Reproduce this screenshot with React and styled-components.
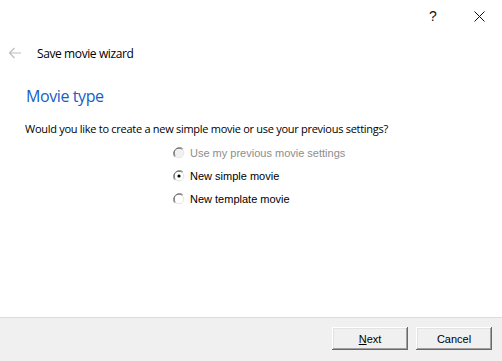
import React, { useState } from "react";
import styled, { createGlobalStyle } from "styled-components";

const Global = createGlobalStyle`
  html, body { margin: 0; padding: 0; background: #fff; }
  body { font-family: "Open Sans", "Noto Sans", sans-serif; }
  * { box-sizing: border-box; }
`;

const Window = styled.div`
  width: 502px;
  height: 361px;
  display: flex;
  flex-direction: column;
  background: #fff;
  overflow: hidden;
`;

const TitleBar = styled.div`
  height: 32px;
  flex-shrink: 0;
  display: flex;
  justify-content: flex-end;
  align-items: center;
`;

const CaptionButton = styled.div`
  width: 46px;
  height: 32px;
  display: flex;
  align-items: center;
  justify-content: center;
  font-family: "Liberation Sans", sans-serif;
  font-size: 14px;
  color: #111;
`;

const Header = styled.div`
  display: flex;
  align-items: center;
  height: 42px;
  flex-shrink: 0;
  padding-left: 8px;
`;

const BackArrow = styled.svg`
  width: 14px;
  height: 12px;
  margin-right: 15px;
`;

const HeaderText = styled.span`
  font-size: 12px;
  color: #000;
  letter-spacing: -0.4px;
`;

const Content = styled.div`
  flex: 1;
  padding: 11px 25px 0 26px;
`;

const Heading = styled.h1`
  margin: 0;
  font-size: 16px;
  line-height: 22px;
  font-weight: 400;
  color: #1560c4;
  letter-spacing: -0.4px;
`;

const Question = styled.p`
  margin: 14px 0 0 -1px;
  font-size: 11px;
  line-height: 16px;
  color: #000;
  letter-spacing: -0.28px;
`;

const Options = styled.div`
  margin: 4px 0 0 147px;
  display: flex;
  flex-direction: column;
`;

const Option = styled.label`
  display: flex;
  align-items: center;
  height: 23px;
  font-family: "Liberation Sans", sans-serif;
  font-size: 11px;
  color: ${(p) => (p.disabled ? "#8d8d8d" : "#000")};
`;

const RadioSvg = styled.svg`
  width: 12px;
  height: 12px;
  margin-right: 5px;
  flex-shrink: 0;
`;

const Footer = styled.div`
  height: 44px;
  flex-shrink: 0;
  border-top: 1px solid #dcdcdc;
  background: #f0f0f0;
  display: flex;
  justify-content: flex-end;
  align-items: flex-start;
  padding: 9px 10px 0 0;
  gap: 8px;
`;

const Button = styled.button`
  width: 76px;
  height: 23px;
  background: #f0f0f0;
  border: none;
  padding: 0;
  box-shadow: inset -1px -1px 0 #696969, inset 1px 1px 0 #fff,
    inset -2px -2px 0 #a0a0a0, inset 2px 2px 0 #e3e3e3;
  font-family: "Liberation Sans", sans-serif;
  font-size: 11px;
  color: #000;
`;

const Radio = ({ checked, disabled }) => (
  <RadioSvg viewBox="0 0 12 12">
    <path d="M10.2 1.8 A6 6 0 0 0 1.8 10.2" fill="none" stroke="#a0a0a0" strokeWidth="1" />
    <path d="M9.4 2.6 A4.8 4.8 0 0 0 2.6 9.4" fill="none" stroke="#696969" strokeWidth="1" />
    <path d="M1.8 10.2 A6 6 0 0 0 10.2 1.8" fill="none" stroke="#fff" strokeWidth="1" />
    <path d="M2.6 9.4 A4.8 4.8 0 0 0 9.4 2.6" fill="none" stroke="#e3e3e3" strokeWidth="1" />
    <circle cx="6" cy="6" r="4" fill={disabled ? "#f0f0f0" : "#fff"} />
    {checked && <circle cx="6" cy="6" r="1.6" fill="#000" />}
  </RadioSvg>
);

export default function App() {
  const [choice, setChoice] = useState("simple");
  const options = [
    { id: "previous", label: "Use my previous movie settings", disabled: true },
    { id: "simple", label: "New simple movie" },
    { id: "template", label: "New template movie" },
  ];

  return (
    <Window>
      <Global />
      <TitleBar>
        <CaptionButton>?</CaptionButton>
        <CaptionButton>
          <svg width="11" height="11" viewBox="0 0 11 11">
            <path d="M0.5 0.5 L10.5 10.5 M10.5 0.5 L0.5 10.5" stroke="#111" strokeWidth="1" />
          </svg>
        </CaptionButton>
      </TitleBar>
      <Header>
        <BackArrow viewBox="0 0 14 12">
          <path d="M13 6 H1.5 M6.5 1 L1.5 6 L6.5 11" fill="none" stroke="#bdbdbd" strokeWidth="1.2" />
        </BackArrow>
        <HeaderText>Save movie wizard</HeaderText>
      </Header>
      <Content>
        <Heading>Movie type</Heading>
        <Question>Would you like to create a new simple movie or use your previous settings?</Question>
        <Options>
          {options.map((o) => (
            <Option key={o.id} disabled={o.disabled} onClick={() => !o.disabled && setChoice(o.id)}>
              <Radio checked={choice === o.id} disabled={o.disabled} />
              {o.label}
            </Option>
          ))}
        </Options>
      </Content>
      <Footer>
        <Button>
          <u>N</u>ext
        </Button>
        <Button>Cancel</Button>
      </Footer>
    </Window>
  );
}
